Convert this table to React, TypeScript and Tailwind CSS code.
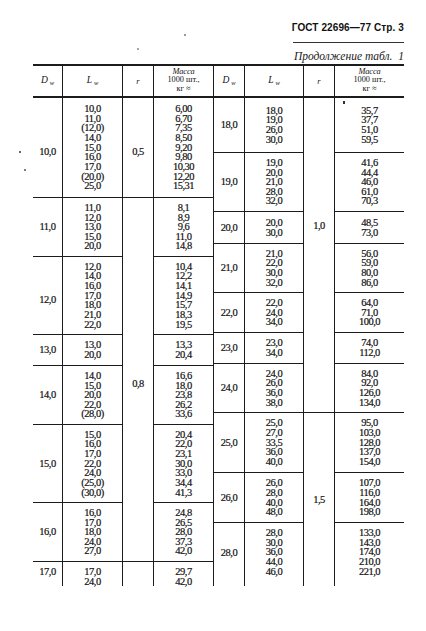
import React from "react";

type Group = {
  d: string;
  l: string[];
  m: string[];
  h: string;
  first?: boolean;
  last?: boolean;
  dClass?: string;
};

const leftGroups: Group[] = [
  { d: "10,0", l: ["10,0", "11,0", "(12,0)", "14,0", "15,0", "16,0", "17,0", "(20,0)", "25,0"], m: ["6,00", "6,70", "7,35", "8,50", "9,20", "9,80", "10,30", "12,20", "15,31"], h: "h-[99px]", first: true, dClass: "justify-center pt-[8px]" },
  { d: "11,0", l: ["11,0", "12,0", "13,0", "15,0", "20,0"], m: ["8,1", "8,9", "9,6", "11,0", "14,8"], h: "h-[59px]" },
  { d: "12,0", l: ["12,0", "14,0", "16,0", "17,0", "18,0", "21,0", "22,0"], m: ["10,4", "12,2", "14,1", "14,9", "15,7", "18,3", "19,5"], h: "h-[78px]", dClass: "justify-center pt-[8px]" },
  { d: "13,0", l: ["13,0", "20,0"], m: ["13,3", "20,4"], h: "h-[31px]" },
  { d: "14,0", l: ["14,0", "15,0", "20,0", "22,0", "(28,0)"], m: ["16,6", "18,0", "23,8", "26,2", "33,6"], h: "h-[59px]" },
  { d: "15,0", l: ["15,0", "16,0", "17,0", "22,0", "24,0", "(25,0)", "(30,0)"], m: ["20,4", "22,0", "23,1", "30,0", "33,0", "34,4", "41,3"], h: "h-[78px]" },
  { d: "16,0", l: ["16,0", "17,0", "18,0", "24,0", "27,0"], m: ["24,8", "26,5", "28,0", "37,3", "42,0"], h: "h-[59px]" },
  { d: "17,0", l: ["17,0", "24,0"], m: ["29,7", "42,0"], h: "h-[24px]", last: true, dClass: "justify-start pt-[5px]" },
];

const rightGroups: Group[] = [
  { d: "18,0", l: ["18,0", "19,0", "26,0", "30,0"], m: ["35,7", "37,7", "51,0", "59,5"], h: "h-[54px]", first: true },
  { d: "19,0", l: ["19,0", "20,0", "21,0", "28,0", "32,0"], m: ["41,6", "44,4", "46,0", "61,0", "70,3"], h: "h-[59px]" },
  { d: "20,0", l: ["20,0", "30,0"], m: ["48,5", "73,0"], h: "h-[32px]" },
  { d: "21,0", l: ["21,0", "22,0", "30,0", "32,0"], m: ["56,0", "59,0", "80,0", "86,0"], h: "h-[49px]" },
  { d: "22,0", l: ["22,0", "24,0", "34,0"], m: ["64,0", "71,0", "100,0"], h: "h-[40px]" },
  { d: "23,0", l: ["23,0", "34,0"], m: ["74,0", "112,0"], h: "h-[31px]" },
  { d: "24,0", l: ["24,0", "26,0", "36,0", "38,0"], m: ["84,0", "92,0", "126,0", "134,0"], h: "h-[49px]" },
  { d: "25,0", l: ["25,0", "27,0", "33,5", "36,0", "40,0"], m: ["95,0", "103,0", "128,0", "137,0", "154,0"], h: "h-[60px]" },
  { d: "26,0", l: ["26,0", "28,0", "40,0", "48,0"], m: ["107,0", "116,0", "164,0", "198,0"], h: "h-[50px]" },
  { d: "28,0", l: ["28,0", "30,0", "36,0", "44,0", "46,0"], m: ["133,0", "143,0", "174,0", "210,0", "221,0"], h: "h-[64px]", last: true, dClass: "justify-center pb-[4px]" },
];

const num = "font-['Liberation_Serif',serif] text-[10.5px] leading-[9.65px] tracking-[-0.5px] text-[#111] [-webkit-text-stroke:0.2px_#111]";
const line = "border-[#1c1c1c]";

function Cell({ g, kind }: { g: Group; kind: "d" | "l" | "m" }) {
  const border = g.first ? "" : `border-t ${line}`;
  if (kind === "d") {
    return (
      <div className={`${g.h} ${border} flex flex-col items-center ${g.dClass ?? "justify-center"} ${num}`}>
        <span>{g.d}</span>
      </div>
    );
  }
  const items = kind === "l" ? g.l : g.m;
  const align = g.last ? "justify-start pt-[5px]" : "justify-center";
  return (
    <div className={`${g.h} ${border} flex flex-col items-center ${align} ${num}`}>
      {items.map((t, i) => (
        <span key={i} className="whitespace-nowrap">
          {t}
        </span>
      ))}
    </div>
  );
}

function HeadSym({ s }: { s: string }) {
  return (
    <div className={`h-[32px] border-b-2 ${line} flex items-center justify-center font-['Liberation_Serif',serif] text-[#111]`}>
      <span className="italic text-[9.5px] leading-none">{s}</span>
      <span className="italic text-[6.5px] leading-none ml-[2px] mt-[4px]">w</span>
    </div>
  );
}

function HeadR() {
  return (
    <div className={`h-[32px] border-b-2 ${line} flex items-center justify-center font-['Liberation_Serif',serif] text-[#111]`}>
      <span className="italic text-[8.5px] leading-none">r</span>
    </div>
  );
}

function HeadMass() {
  return (
    <div className={`h-[32px] border-b-2 ${line} flex flex-col items-center justify-center font-['Liberation_Serif',serif] text-[#111] text-[8.3px] leading-[8.4px] pb-[1px]`}>
      <span className="italic">Масса</span>
      <span>1000 шт.,</span>
      <span>кг ≈</span>
    </div>
  );
}

export default function App() {
  return (
    <div className="relative w-[426px] h-[631px] bg-white overflow-hidden">
      {/* stray scan marks */}
      <span className="absolute left-[19px] top-[151px] w-[2px] h-[2px] rounded-full bg-[#333]" />
      <span className="absolute left-[24px] top-[169px] w-[1.5px] h-[1.5px] rounded-full bg-[#555]" />
      <span className="absolute left-[184px] top-[34px] w-[1.5px] h-[1.5px] rounded-full bg-[#777]" />
      <span className="absolute left-[137px] top-[48px] w-[1.5px] h-[1.5px] rounded-full bg-[#888]" />
      <span className="absolute left-[343px] top-[101px] w-[1.5px] h-[3px] bg-[#333]" />

      <div className="pt-[22px] pr-[22px] flex flex-col items-end">
        <div className="font-['Liberation_Sans',sans-serif] font-bold text-[10px] leading-[12px] text-[#111] tracking-[0.1px] whitespace-nowrap">
          ГОСТ 22696—77 Стр. 3
        </div>
        <div className="mt-[8px] w-[111px] border-t border-[#333]" />
        <div className="mt-[7px] font-['Liberation_Serif',serif] italic text-[11.5px] leading-[12px] text-[#1a1a1a] whitespace-nowrap">
          Продолжение табл.&nbsp;&nbsp;1
        </div>
      </div>

      <div className={`ml-[33px] mt-[2px] w-[371px] border-t-2 ${line} flex`}>
        {/* left half */}
        <div className="w-[29px] flex flex-col">
          <HeadSym s="D" />
          {leftGroups.map((g, i) => (
            <Cell key={i} g={g} kind="d" />
          ))}
        </div>
        <div className={`w-[60px] flex flex-col border-l ${line}`}>
          <HeadSym s="L" />
          {leftGroups.map((g, i) => (
            <Cell key={i} g={g} kind="l" />
          ))}
        </div>
        <div className={`w-[31px] flex flex-col border-l ${line}`}>
          <HeadR />
          <div className={`h-[99px] flex items-center justify-center pt-[9px] ${num}`}>0,5</div>
          <div className={`h-[364px] border-t ${line} flex items-center justify-center pt-[8px] ${num}`}>0,8</div>
          <div className={`h-[24px] border-t ${line}`} />
        </div>
        <div className={`w-[60px] flex flex-col border-l ${line}`}>
          <HeadMass />
          {leftGroups.map((g, i) => (
            <Cell key={i} g={g} kind="m" />
          ))}
        </div>

        {/* right half */}
        <div className={`w-[31px] flex flex-col border-l ${line}`}>
          <HeadSym s="D" />
          {rightGroups.map((g, i) => (
            <Cell key={i} g={g} kind="d" />
          ))}
        </div>
        <div className={`w-[59px] flex flex-col border-l ${line}`}>
          <HeadSym s="L" />
          {rightGroups.map((g, i) => (
            <Cell key={i} g={g} kind="l" />
          ))}
        </div>
        <div className={`w-[31px] flex flex-col border-l ${line}`}>
          <HeadR />
          <div className={`h-[314px] flex flex-col items-center justify-start pt-[123px] ${num}`}>1,0</div>
          <div className={`h-[174px] border-t ${line} flex items-center justify-center ${num}`}>1,5</div>
        </div>
        <div className={`w-[70px] flex flex-col border-l ${line}`}>
          <HeadMass />
          {rightGroups.map((g, i) => (
            <Cell key={i} g={g} kind="m" />
          ))}
        </div>
      </div>
    </div>
  );
}
